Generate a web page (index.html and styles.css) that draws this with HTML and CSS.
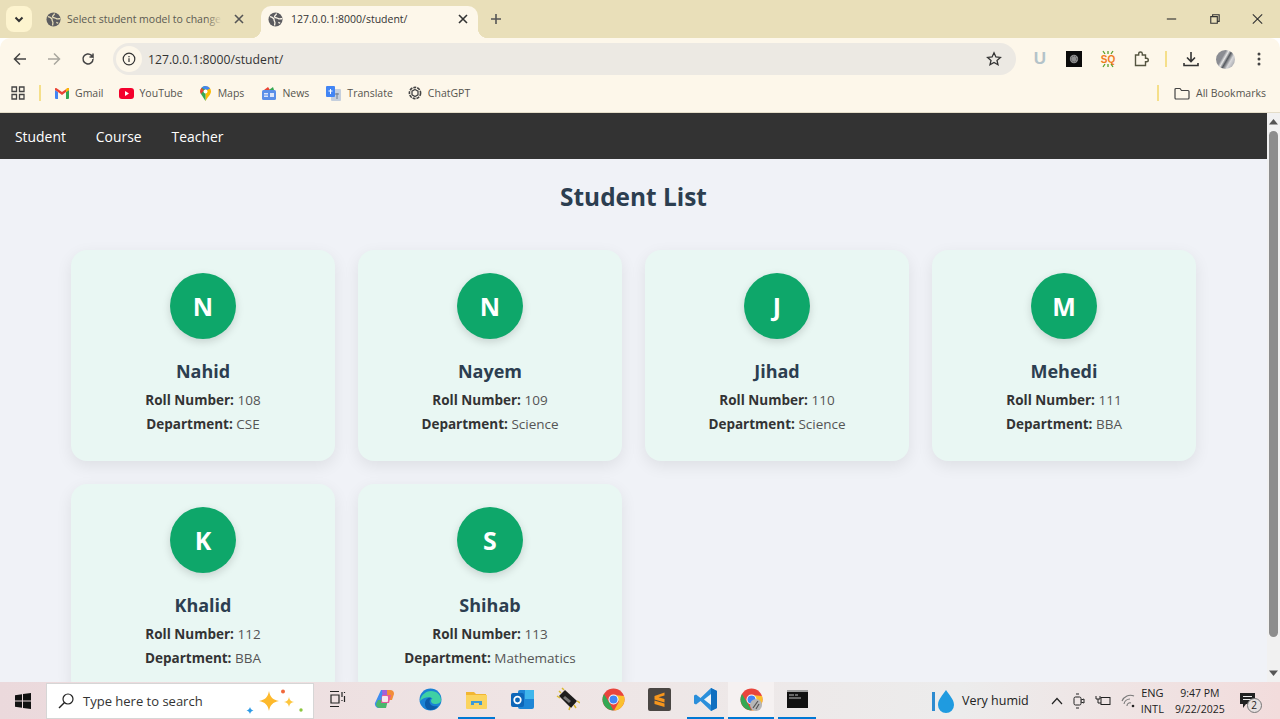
FILE: index.html
```html
<!DOCTYPE html>
<html>
<head>
    <meta content="text/html; charset=utf-8" http-equiv="Content-Type">
    <meta content="width=device-width, initial-scale=1" name="viewport">
    <link rel="stylesheet" href="styles.css">
    <title>Student List</title>
</head>
<body>
<div class="screen">

    <!-- tab strip -->
    <div class="tabstrip">
        <div class="tab-search">
            <svg width="12" height="12" viewBox="0 0 12 12"><path d="M2.500 4.500 6 8l3.500-3.500" fill="none" stroke="#333" stroke-width="2"/></svg>
        </div>
        <div class="tab">
            <svg class="globe" width="15" height="15" viewBox="0 0 16 16"><circle cx="8" cy="8" r="7.500" fill="#5c5c60"/><path d="M2 5c2 0 3 1 4 2s0 2 1 3 0 3 0 4.500M9 1.500c0 2-2 2-2 3.500s3 1 4 2 3 0 4 0M11 11l2 1" fill="none" stroke="#e9dfb9" stroke-width="1.400"/></svg>
            <span class="tab-title">Select student model to change</span>
            <span class="tab-fade"></span>
            <svg class="tab-close" width="10" height="10" viewBox="0 0 10 10"><path d="M1 1l8 8M9 1l-8 8" stroke="#555" stroke-width="1.600"/></svg>
        </div>
        <div class="tab tab-active">
            <svg class="globe" width="15" height="15" viewBox="0 0 16 16"><circle cx="8" cy="8" r="7.500" fill="#5c5c60"/><path d="M2 5c2 0 3 1 4 2s0 2 1 3 0 3 0 4.500M9 1.500c0 2-2 2-2 3.500s3 1 4 2 3 0 4 0M11 11l2 1" fill="none" stroke="#fdf7ea" stroke-width="1.400"/></svg>
            <span class="tab-title">127.0.0.1:8000/student/</span>
            <svg class="tab-close" width="10" height="10" viewBox="0 0 10 10"><path d="M1 1l8 8M9 1l-8 8" stroke="#333" stroke-width="1.600"/></svg>
        </div>
        <svg class="new-tab" width="12" height="12" viewBox="0 0 12 12"><path d="M6 1v10M1 6h10" stroke="#555" stroke-width="1.600"/></svg>
        <div class="win-controls">
            <svg width="46" height="12" viewBox="0 0 46 12"><path d="M18 6h10" stroke="#333" stroke-width="1.200"/></svg>
            <svg width="46" height="12" viewBox="0 0 46 12"><path d="M19 3.500h7v7h-7zM21 3.500V1.500h7v7h-2" fill="none" stroke="#333" stroke-width="1.200"/></svg>
            <svg width="46" height="12" viewBox="0 0 46 12"><path d="M18 1l10 10M28 1 18 11" stroke="#333" stroke-width="1.200"/></svg>
        </div>
    </div>

    <!-- address bar -->
    <div class="toolbar">
        <div class="nav-btns">
            <svg width="14" height="14" viewBox="0 0 14 14"><path d="M13 7H2M7 1.500 1.500 7 7 12.500" fill="none" stroke="#444" stroke-width="1.500"/></svg>
            <svg width="14" height="14" viewBox="0 0 14 14"><path d="M1 7h11M7 1.500 12.500 7 7 12.500" fill="none" stroke="#a9a79f" stroke-width="1.500"/></svg>
            <svg width="14" height="14" viewBox="0 0 14 14"><path d="M12 7a5 5 0 1 1-1.500-3.600L12 5V1.500M12 5H8.500" fill="none" stroke="#444" stroke-width="1.500"/></svg>
        </div>
        <div class="omnibox">
            <span class="info-chip">
                <svg width="14" height="14" viewBox="0 0 14 14"><circle cx="7" cy="7" r="5.800" fill="none" stroke="#333" stroke-width="1.200"/><path d="M7 6.200V10M7 4v1.200" stroke="#333" stroke-width="1.200"/></svg>
            </span>
            <span class="url">127.0.0.1:8000/student/</span>
            <svg class="star" width="16" height="16" viewBox="0 0 16 16"><path d="m8 1.800 1.900 4.100 4.500.5-3.400 3 1 4.400L8 11.500l-4 2.300 1-4.400-3.400-3 4.500-.5z" fill="none" stroke="#333" stroke-width="1.300"/></svg>
        </div>
        <div class="ext-icons">
            <span class="ext-u">U</span>
            <svg width="16" height="16" viewBox="0 0 16 16"><rect width="16" height="16" fill="#0b0b0b"/><circle cx="8" cy="8" r="4.200" fill="#8e8e8e"/><circle cx="8" cy="8" r="2.800" fill="none" stroke="#444" stroke-dasharray="1 1"/></svg>
            <svg width="16" height="18" viewBox="0 0 16 18"><path d="M3 1l2 3M13 1l-2 3M8 1v3M3 17l2-3M13 17l-2-3M8 17v-3" stroke="#5aa02c" stroke-width="1.300"/><text class="ext-sq" x="8" y="13" text-anchor="middle">SQ</text></svg>
            <svg width="16" height="16" viewBox="0 0 16 16"><path d="M1.500 4h3.200V2.800a1.800 1.800 0 0 1 3.600 0V4h3.200v3.200h1a1.800 1.800 0 0 1 0 3.600h-1v3.700H1.500z" fill="none" stroke="#555540" stroke-width="1.400"/></svg>
        </div>
        <span class="sep sep-toolbar"></span>
        <svg class="dl-icon" width="16" height="16" viewBox="0 0 16 16"><path d="M8 1v9M4 6.500 8 10.500l4-4M1 12v2.500h14V12" fill="none" stroke="#333" stroke-width="1.600"/></svg>
        <span class="profile"></span>
        <svg class="dots" width="4" height="14" viewBox="0 0 4 14"><circle cx="2" cy="2" r="1.500" fill="#444"/><circle cx="2" cy="7" r="1.500" fill="#444"/><circle cx="2" cy="12" r="1.500" fill="#444"/></svg>
    </div>

    <!-- bookmarks -->
    <div class="bookmarks">
        <svg class="apps" width="14" height="14" viewBox="0 0 14 14"><path d="M1 1h4.500v4.500H1zM8.500 1H13v4.500H8.500zM1 8.500h4.500V13H1zM8.500 8.500H13V13H8.500z" fill="none" stroke="#444" stroke-width="1.300"/></svg>
        <span class="sep sep-apps"></span>
        <a class="bm bm-gmail">
            <svg width="14" height="11" viewBox="0 0 14 11"><path d="M0 2v8a1 1 0 0 0 1 1h2V4z" fill="#4285f4"/><path d="M14 2v8a1 1 0 0 1-1 1h-2V4z" fill="#34a853"/><path d="M0 2 3 4l4 3 4-3 3-2V1a1 1 0 0 0-1.600-.8L7 4 1.600.2A1 1 0 0 0 0 1z" fill="#ea4335"/><path d="M11 4V1l1.400-.8A1 1 0 0 1 14 1v1z" fill="#fbbc04"/></svg>
            Gmail
        </a>
        <a class="bm bm-yt">
            <svg width="15" height="11" viewBox="0 0 15 11"><rect width="15" height="11" rx="3" fill="#f4002c"/><path d="m6 3 4 2.500L6 8z" fill="#fff"/></svg>
            YouTube
        </a>
        <a class="bm bm-maps">
            <svg width="11" height="15" viewBox="0 0 11 15"><path d="M5.500 0a5.500 5.500 0 0 1 5.500 5.500c0 3-3 5-5.500 9.500z" fill="#fbbc04"/><path d="M5.500 0A5.500 5.500 0 0 0 1 8l4.500 7z" fill="#34a853"/><path d="M1.500 1.800 4 4.500 1 8A5.500 5.500 0 0 1 1.500 1.800z" fill="#ea4335"/><path d="M1.600 1.700A5.500 5.500 0 0 1 10 2.400L7 4z" fill="#4285f4"/><circle cx="5.500" cy="5.500" r="2" fill="#fff"/></svg>
            Maps
        </a>
        <a class="bm bm-news">
            <svg width="14" height="13" viewBox="0 0 14 13"><path d="M2 3 6 0l2 3z" fill="#ea4335"/><path d="M7 3l4-3 1 3z" fill="#34a853"/><rect y="3" width="14" height="10" rx="1.500" fill="#5a8fe8"/><rect x="2" y="6" width="4" height="1.500" fill="#dce6fb"/><rect x="8" y="6" width="4" height="4" fill="#dce6fb"/><rect x="2" y="8.500" width="4" height="1.500" fill="#dce6fb"/></svg>
            News
        </a>
        <a class="bm bm-translate">
            <svg width="15" height="15" viewBox="0 0 15 15"><rect x="5" y="3" width="10" height="12" rx="1" fill="#c5cfdd"/><rect width="9" height="11" rx="1" fill="#4285f4"/><path d="M2.500 5h4M4.500 3v5" stroke="#fff" stroke-width="1"/><path d="M9 8h4M11 7v6" stroke="#6f7c8d" stroke-width="1"/></svg>
            Translate
        </a>
        <a class="bm bm-gpt">
            <svg width="14" height="14" viewBox="0 0 14 14"><circle cx="7" cy="7" r="5.600" fill="none" stroke="#444" stroke-width="1.600" stroke-dasharray="3 1"/><path d="M7 3.500 10 5.200v3.600L7 10.500 4 8.800V5.200z" fill="none" stroke="#444" stroke-width="1.300"/></svg>
            ChatGPT
        </a>
        <span class="sep sep-bm"></span>
        <a class="bm bm-all">
            <svg width="16" height="13" viewBox="0 0 16 13"><path d="M1 2.500A1 1 0 0 1 2 1.500h4l1.500 2H14a1 1 0 0 1 1 1V11a1 1 0 0 1-1 1H2a1 1 0 0 1-1-1z" fill="none" stroke="#444" stroke-width="1.200"/></svg>
            All Bookmarks
        </a>
    </div>

    <!-- the page itself -->
    <div class="viewport">
        <div class="page">
            <nav class="navbar">
                <a>Student</a>
                <a>Course</a>
                <a>Teacher</a>
            </nav>
            <h1 class="heading">Student List</h1>
            <div class="student-grid">
                <div class="card">
                    <div class="avatar">N</div>
                    <h2>Nahid</h2>
                    <p><b>Roll Number:</b> 108</p>
                    <p><b>Department:</b> CSE</p>
                </div>
                <div class="card">
                    <div class="avatar">N</div>
                    <h2>Nayem</h2>
                    <p><b>Roll Number:</b> 109</p>
                    <p><b>Department:</b> Science</p>
                </div>
                <div class="card">
                    <div class="avatar">J</div>
                    <h2>Jihad</h2>
                    <p><b>Roll Number:</b> 110</p>
                    <p><b>Department:</b> Science</p>
                </div>
                <div class="card">
                    <div class="avatar">M</div>
                    <h2>Mehedi</h2>
                    <p><b>Roll Number:</b> 111</p>
                    <p><b>Department:</b> BBA</p>
                </div>
                <div class="card">
                    <div class="avatar">K</div>
                    <h2>Khalid</h2>
                    <p><b>Roll Number:</b> 112</p>
                    <p><b>Department:</b> BBA</p>
                </div>
                <div class="card">
                    <div class="avatar">S</div>
                    <h2>Shihab</h2>
                    <p><b>Roll Number:</b> 113</p>
                    <p><b>Department:</b> Mathematics</p>
                </div>
            </div>
        </div>
        <div class="scrollbar">
            <svg width="9" height="6" viewBox="0 0 9 6"><path d="M0 5.500 4.500 0 9 5.500z" fill="#555"/></svg>
            <div class="scroll-track"><div class="scroll-thumb"></div></div>
            <svg width="9" height="6" viewBox="0 0 9 6"><path d="M0 .5 4.500 6 9 .5z" fill="#555"/></svg>
        </div>
    </div>

    <!-- windows taskbar -->
    <div class="taskbar">
        <div class="start">
            <svg width="16" height="16" viewBox="0 0 16 16"><path d="M0 2.200 7 1.200v6.300H0zM8 1l8-1v7.500H8zM0 8.500h7v6.300l-7-1zM8 8.500h8V16l-8-1.100z" fill="#111"/></svg>
        </div>
        <div class="searchbox">
            <svg width="18" height="18" viewBox="0 0 18 18"><circle cx="11" cy="7" r="5" fill="none" stroke="#222" stroke-width="1.200"/><path d="M7.500 10.500 2 16" stroke="#222" stroke-width="1.400"/></svg>
            <span class="search-text">Type here to search</span>
            <svg class="sparkles" width="60" height="28" viewBox="0 0 60 28"><path d="M24 3c1 6 4 9 10 10-6 1-9 4-10 10-1-6-4-9-10-10 6-1 9-4 10-10z" fill="#fdb92c"/><path d="M44 9c.5 3 2 4.500 5 5-3 .5-4.500 2-5 5-.5-3-2-4.500-5-5 3-.5 4.500-2 5-5z" fill="#fdc63f"/><path d="M5 19c.5 2 1.500 3 3.500 3.500-2 .5-3 1.500-3.500 3.500-.5-2-1.500-3-3.500-3.500 2-.5 3-1.500 3.500-3.500z" fill="#2f9be6"/><circle cx="38" cy="3.500" r="2" fill="#f0683c"/><circle cx="56" cy="22" r="1.700" fill="#8cc63f"/></svg>
        </div>
        <div class="task-item task-view">
            <svg width="17" height="16" viewBox="0 0 17 16"><path d="M1 .5h9M1 15.500h9M2 4h8v8H2z M13 1v5M13 9v1M15.500 1v1M15.500 5v6" fill="none" stroke="#222" stroke-width="1.200"/></svg>
        </div>
        <div class="task-item">
            <svg width="22" height="22" viewBox="0 0 22 22"><path d="M7 2h6l-3 18H5a4 4 0 0 1-4-5z" fill="#3f8df0"/><path d="M8 2h5a4 4 0 0 1 4 3l-3 10H9z" fill="#a45fd8"/><path d="M13 2h3a4 4 0 0 1 4 4l-2 6h-5z" fill="#f28c3a"/><path d="M4 12h10l-2 8H6a4 4 0 0 1-4-4z" fill="#49b66c"/><path d="M8 7h9l-2 8H7z" fill="#e55a9c"/><rect x="8" y="8" width="6" height="6" rx="1" fill="#f6e7ee"/></svg>
        </div>
        <div class="task-item">
            <svg width="23" height="23" viewBox="0 0 23 23"><circle cx="11.500" cy="11.500" r="11" fill="#1a82d4"/><path d="M1 13C2 6 8 3 12 3c6 0 10 4 10 9 0 3-3 4-6 4-2 0-4-1-4-3 0-1 .5-2 1.500-2.500C11 8 4 9 1 13z" fill="#3fd0a4"/><path d="M6 16c0-4 3-7 6-6-2 2-2 5 0 7 2 1.500 5 1.500 7 1-2 3-5 4-7.500 4C8 22 6 19 6 16z" fill="#0c5ba8"/></svg>
        </div>
        <div class="task-item task-running">
            <svg width="21" height="19" viewBox="0 0 21 19"><path d="M0 2h8l2 2h10v3H0z" fill="#f2b632"/><path d="M0 5h21v13a1 1 0 0 1-1 1H1a1 1 0 0 1-1-1z" fill="#fbd45f"/><path d="M5 15v-4h11v4h-3v-2H8v2z" fill="#3d9ad8"/><rect x="8" y="13" width="5" height="6" fill="#fbd45f"/></svg>
        </div>
        <div class="task-item">
            <svg width="23" height="21" viewBox="0 0 23 21"><rect x="7" y="1" width="16" height="19" rx="2" fill="#1e86d6"/><rect x="14" y="1" width="9" height="9" fill="#3fb6ec"/><rect y="4" width="13" height="14" rx="2" fill="#0d66b8"/><circle cx="6.500" cy="11" r="3.300" fill="none" stroke="#fff" stroke-width="1.700"/></svg>
        </div>
        <div class="task-item">
            <svg width="24" height="24" viewBox="0 0 24 24"><path d="M3 9 9 3l12 11-6 7z" fill="#1d1d1d"/><path d="M9 9l6 5-2 2-6-5z" fill="#777"/><path d="M5 6 3 4M8 3 6 1M4 11 1 9M14 20l-1 3M18 18l2 3M21 14l3 2" stroke="#d9b92f" stroke-width="1.500"/></svg>
        </div>
        <div class="task-item">
            <svg width="23" height="23" viewBox="0 0 23 23"><circle cx="11.500" cy="11.500" r="11" fill="#e8453c"/><path d="M11.500 22.500A11 11 0 0 1 2 6l6 10z" fill="#34a853"/><path d="M22 8a11 11 0 0 1-10 14.500L17 13.500 11.500 7z" fill="#fbc02d"/><circle cx="11.500" cy="11.500" r="5" fill="#fff"/><circle cx="11.500" cy="11.500" r="4" fill="#4285f4"/></svg>
        </div>
        <div class="task-item">
            <svg width="23" height="23" viewBox="0 0 23 23"><rect width="23" height="23" rx="2" fill="#4a4643"/><path d="M16.500 4.500 6.500 8v3.500l10 3v-3.500l-6-1.800 6-1.800zM6.500 12.500v3.500l10 3v-3.500z" fill="#f7961c"/></svg>
        </div>
        <div class="task-item task-running">
            <svg width="23" height="23" viewBox="0 0 23 23"><path d="M17 0 23 3v17l-6 3L6.500 13 2 16.500 0 15.500V7.500L2 6.500 6.500 10z" fill="#2a8fdb"/><path d="M17 6v11l-7-5.500z" fill="#eef4f8"/><path d="M17 0l6 3v17l-6 3z" fill="#0f6fc0"/></svg>
        </div>
        <div class="task-item task-running task-active">
            <svg width="23" height="23" viewBox="0 0 23 23"><circle cx="11.500" cy="11.500" r="11" fill="#e8453c"/><path d="M11.500 22.500A11 11 0 0 1 2 6l6 10z" fill="#34a853"/><path d="M22 8a11 11 0 0 1-10 14.500L17 13.500 11.500 7z" fill="#fbc02d"/><circle cx="11.500" cy="11.500" r="5" fill="#fff"/><circle cx="11.500" cy="11.500" r="4" fill="#4285f4"/><circle cx="16" cy="17" r="6" fill="#b6b6b6"/><path d="M13 20l5-7M16 21l3-5" stroke="#555" stroke-width="1.200"/></svg>
        </div>
        <div class="task-item task-running">
            <svg width="21" height="18" viewBox="0 0 21 18"><rect width="21" height="18" fill="#111"/><rect width="21" height="2" fill="#9c9c9c"/><path d="M2 5h5M8 5h3M2 8h12" stroke="#bbb" stroke-width="1"/></svg>
        </div>
        <div class="weather">
            <svg width="24" height="24" viewBox="0 0 24 24"><rect x="0" y="3" width="3" height="19" fill="#2d8bd0"/><path d="M14 1c3 5 8 9 8 15a8 8 0 0 1-16 0c0-6 5-10 8-15z" fill="#1f9be0"/></svg>
            <span>Very humid</span>
        </div>
        <div class="tray">
            <svg width="12" height="8" viewBox="0 0 12 8"><path d="M1 7l5-5.500L11 7" fill="none" stroke="#222" stroke-width="1.200"/></svg>
            <svg width="12" height="16" viewBox="0 0 12 16"><rect x="1" y="4" width="7" height="8" rx="1.500" fill="none" stroke="#222"/><path d="M8 7l3-1v4l-3-1M3 1h3M3 15h3" fill="none" stroke="#222"/></svg>
            <svg width="16" height="12" viewBox="0 0 16 12"><rect x="6" y="2.500" width="9" height="7" fill="none" stroke="#222"/><path d="M1 1v3h4V1M3 4v4h3" fill="none" stroke="#222"/></svg>
            <svg width="14" height="14" viewBox="0 0 14 14"><path d="M1 7a9 9 0 0 1 12-5M3 10a6 6 0 0 1 6-5M6 12a3 3 0 0 1 4-3" fill="none" stroke="#777" stroke-width="1.100"/><circle cx="12" cy="12" r="1.300" fill="#222"/></svg>
        </div>
        <div class="lang"><span>ENG</span><span>INTL</span></div>
        <div class="clock"><span>9:47 PM</span><span>9/22/2025</span></div>
        <div class="notify">
            <svg width="16" height="16" viewBox="0 0 16 16"><path d="M0 0h15v11H6l-3 4v-4H0z" fill="#222"/><path d="M3 3.500h9M3 6.500h9" stroke="#eee"/></svg>
            <span class="notify-count">2</span>
        </div>
    </div>
</div>
</body>
</html>
```

FILE: styles.css
```css
* {
    box-sizing: border-box;
}

html, body {
    margin: 0;
    height: 100%;
    overflow: hidden;
}

body {
    font-family: "Open Sans", "Noto Sans", sans-serif;
    color: #333;
}

.screen {
    display: flex;
    flex-direction: column;
    height: 719px;
}

/* tab strip */
.tabstrip {
    display: flex;
    align-items: flex-end;
    height: 38px;
    background: #e9dfb9;
    flex: none;
}

.tab-search {
    display: flex;
    align-items: center;
    justify-content: center;
    width: 26px;
    height: 26px;
    margin: 0 7px 6px 6px;
    background: #fdf4cf;
    border-radius: 8px;
}

.tab {
    position: relative;
    display: flex;
    align-items: center;
    width: 215px;
    height: 32px;
    padding: 0 10px 6px 7px;
    font-size: 10.500px;
    color: #5b5a52;
    white-space: nowrap;
    overflow: hidden;
}

.tab .globe {
    flex: none;
    margin-right: 6px;
}

.tab-title {
    flex: 1;
    overflow: hidden;
}

.tab-fade {
    position: absolute;
    right: 32px;
    top: 0;
    width: 16px;
    height: 28px;
    background: linear-gradient(to right, rgba(233, 223, 185, 0), #e9dfb9);
}

.tab-close {
    flex: none;
    margin-left: 12px;
}

.tab-active {
    width: 217px;
    margin-left: 7px;
    background: #fdf7ea;
    border-radius: 10px 10px 0 0;
    color: #333;
    overflow: visible;
}

.tab-active .globe {
    margin-right: 8px;
}

.tab-active::before,
.tab-active::after {
    content: "";
    position: absolute;
    bottom: 0;
    width: 10px;
    height: 10px;
}

.tab-active::before {
    left: -10px;
    background: radial-gradient(circle at 0 0, transparent 10px, #fdf7ea 10.500px);
}

.tab-active::after {
    right: -10px;
    background: radial-gradient(circle at 100% 0, transparent 10px, #fdf7ea 10.500px);
}

.new-tab {
    margin: 0 0 13px 12px;
}

.win-controls {
    display: flex;
    margin-left: auto;
    padding: 0 0 13px 0;
    margin-right: 1px;
}

.win-controls svg {
    width: 43px;
}

/* address bar */
.toolbar {
    display: flex;
    align-items: center;
    height: 38px;
    padding-top: 4px;
    background: #fdf7ea;
    border-radius: 10px 10px 0 0;
    flex: none;
}

.nav-btns {
    display: flex;
    gap: 20px;
    padding-left: 13px;
    width: 113px;
    flex: none;
}

.omnibox {
    display: flex;
    align-items: center;
    width: 903px;
    height: 32px;
    padding: 0 14px 0 3px;
    background: #ece9e3;
    border-radius: 16px;
    flex: none;
}

.info-chip {
    display: flex;
    align-items: center;
    justify-content: center;
    width: 26px;
    height: 26px;
    background: #fdf7ea;
    border-radius: 50%;
}

.url {
    flex: 1;
    margin-left: 6px;
    font-size: 12.200px;
    color: #333;
}

.ext-icons {
    display: flex;
    align-items: center;
    gap: 18px;
    margin-left: 16px;
    flex: none;
}

.ext-u {
    width: 16px;
    font-family: "Liberation Sans", sans-serif;
    font-weight: bold;
    font-size: 17px;
    color: #b4c3c9;
    text-align: center;
}

.ext-sq {
    font-family: "Liberation Sans", sans-serif;
    font-weight: bold;
    font-size: 10px;
    fill: #f07c1e;
}

.sep {
    display: block;
    width: 2px;
    height: 16px;
    background: #f5df8a;
    flex: none;
}

.sep-toolbar {
    margin-left: 15px;
}

.dl-icon {
    margin-left: 16px;
}

.profile {
    width: 19px;
    height: 19px;
    margin-left: 17px;
    border-radius: 50%;
    background: linear-gradient(120deg, #8b8d93 0 35%, #e8e8e8 45%, #55595f 55%, #d8d8da 70%, #8b8d93);
}

.dots {
    margin-left: 22px;
}

/* bookmarks */
.bookmarks {
    display: flex;
    align-items: center;
    height: 37px;
    padding: 0 0 2px 11px;
    background: #fdf7ea;
    border-bottom: 1px solid #e4ddc9;
    font-size: 10.500px;
    color: #55544e;
    flex: none;
}

.bm {
    display: flex;
    align-items: center;
    gap: 6px;
    white-space: nowrap;
}

.sep-apps {
    margin-left: 14px;
}

.bm-gmail {
    margin-left: 14px;
}

.bm-yt {
    margin-left: 15px;
}

.bm-maps {
    margin-left: 17px;
    gap: 7px;
}

.bm-news {
    margin-left: 18px;
}

.bm-translate {
    margin-left: 17px;
    gap: 6px;
}

.bm-gpt {
    margin-left: 15px;
}

.sep-bm {
    margin-left: auto;
}

.bm-all {
    margin: 0 14px 0 15px;
}

/* page */
.viewport {
    display: flex;
    flex: 1;
    min-height: 0;
}

.page {
    flex: 1;
    min-width: 0;
    overflow: hidden;
    background: #f0f2f7;
}

.navbar {
    display: flex;
    gap: 30px;
    align-items: center;
    height: 46px;
    padding: 0 15px;
    background: #333;
    font-size: 13.900px;
    color: #fff;
}

.heading {
    margin: 21px 0 36px;
    font-size: 24.400px;
    line-height: 34px;
    font-weight: 700;
    color: #2c3e50;
    text-align: center;
}

.student-grid {
    display: grid;
    grid-template-columns: repeat(4, 1fr);
    gap: 23px;
    padding: 0 71px;
}

.card {
    height: 211px;
    padding: 23px;
    background: #e9f7f3;
    border-radius: 16px;
    box-shadow: 0 5px 16px rgba(0, 0, 0, 0.08);
    text-align: center;
}

.avatar {
    display: flex;
    align-items: center;
    justify-content: center;
    width: 66px;
    height: 66px;
    margin: 0 auto 19px;
    background: #0ea76a;
    border-radius: 50%;
    box-shadow: 0 3px 9px rgba(0, 0, 0, 0.15);
    font-size: 25px;
    font-weight: 700;
    color: #fff;
}

.card h2 {
    margin: 0 0 5px;
    font-size: 18px;
    line-height: 26px;
    font-weight: 700;
    color: #2c3e50;
}

.card p {
    margin: 0;
    font-size: 13.500px;
    line-height: 23.500px;
    color: #555;
    white-space: nowrap;
}

.card b {
    color: #333;
}

.scrollbar {
    display: flex;
    flex-direction: column;
    align-items: center;
    width: 13px;
    padding: 6px 0 6px;
    background: #f1f1f1;
}

.scroll-track {
    flex: 1;
    width: 100%;
    padding: 6px 2px 0 2px;
}

.scroll-thumb {
    height: 506px;
    background: #8d8d8d;
    border-radius: 5px;
}

/* taskbar */
.taskbar {
    display: flex;
    align-items: center;
    height: 37px;
    background: linear-gradient(to right, #ebd9dc 0, #efe4e4 40%, #ececec 75%, #f2dcdc 100%);
    font-size: 12px;
    color: #222;
    flex: none;
}

.start {
    display: flex;
    align-items: center;
    justify-content: center;
    width: 46px;
    height: 100%;
    flex: none;
}

.searchbox {
    position: relative;
    display: flex;
    align-items: center;
    width: 268px;
    height: 36px;
    padding-left: 10px;
    background: #fff;
    border: 1px solid #d6d6d6;
    flex: none;
}

.search-text {
    margin-left: 8px;
    font-size: 13px;
    color: #333;
}

.sparkles {
    position: absolute;
    right: 8px;
    top: 4px;
}

.task-item {
    position: relative;
    display: flex;
    align-items: center;
    justify-content: center;
    width: 45.800px;
    height: 100%;
    flex: none;
    padding-bottom: 3px;
}

.task-view {
    width: 48px;
    padding-right: 2px;
}

.task-running::after {
    content: "";
    position: absolute;
    left: 4px;
    right: 4px;
    bottom: 0;
    height: 2px;
    background: #0078d4;
}

.task-active {
    background-color: #f5f1f1;
}

.task-active::after {
    left: 0;
    right: 0;
}

.weather {
    display: flex;
    align-items: center;
    gap: 6px;
    margin-left: 112px;
    font-size: 12.500px;
    white-space: nowrap;
}

.tray {
    display: flex;
    align-items: center;
    gap: 10px;
    margin-left: 22px;
}

.lang, .clock {
    display: flex;
    flex-direction: column;
    align-items: center;
    line-height: 16px;
    white-space: nowrap;
}

.lang {
    margin-left: 6px;
    font-size: 11px;
}

.clock {
    margin-left: 11px;
    font-size: 10.500px;
}

.notify {
    position: relative;
    margin-left: 15px;
    height: 16px;
}

.notify-count {
    position: absolute;
    left: 7px;
    top: 5px;
    width: 15px;
    height: 15px;
    border: 1px solid #777;
    border-radius: 50%;
    background: #e6e0e0;
    font-size: 10px;
    line-height: 13px;
    text-align: center;
}
```
